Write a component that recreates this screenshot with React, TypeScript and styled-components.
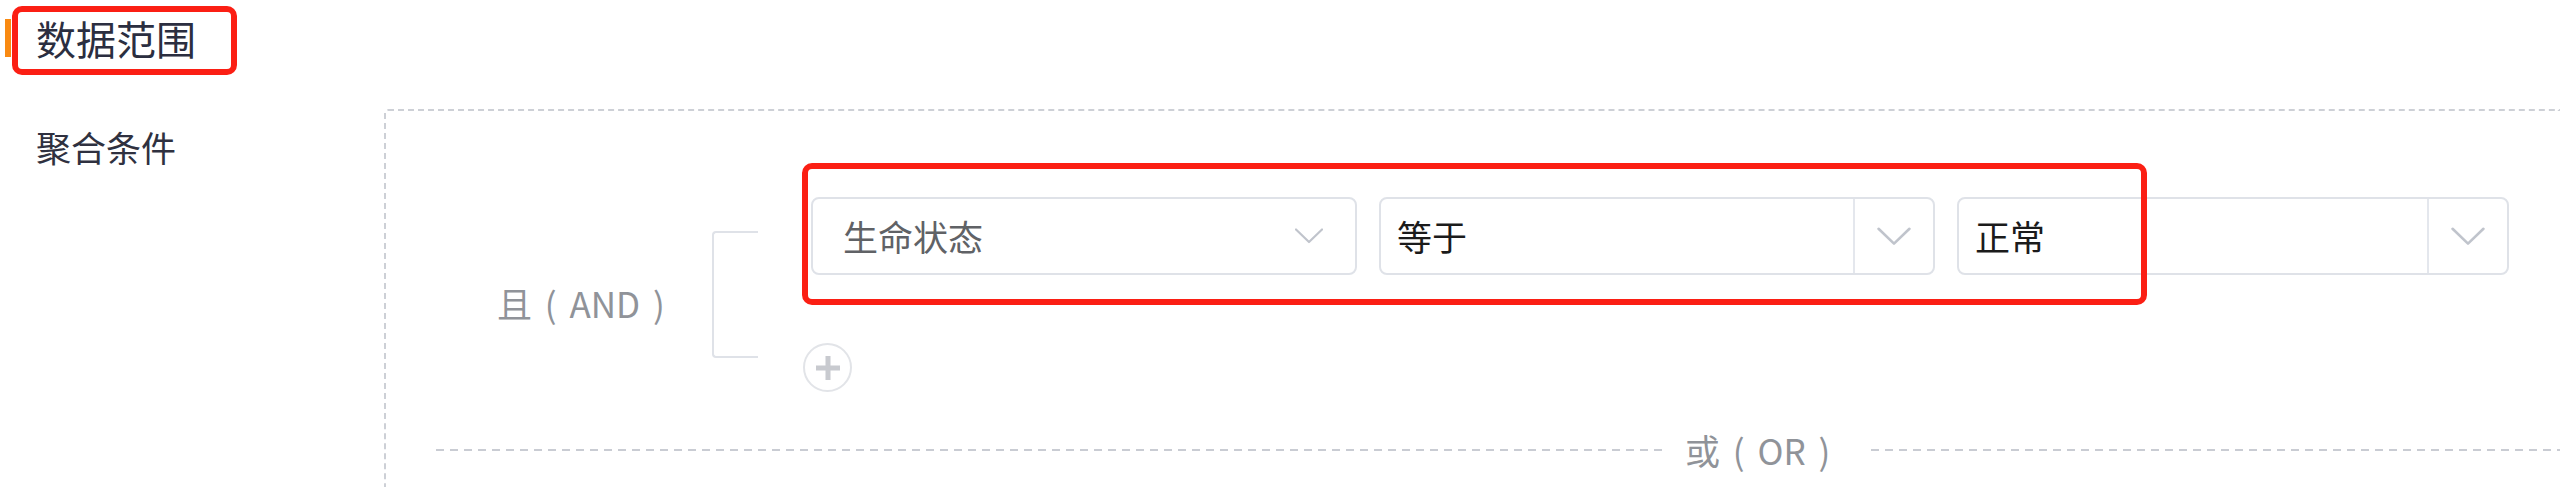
import React from 'react';
import styled, { createGlobalStyle } from 'styled-components';

const GlobalStyle = createGlobalStyle`
  html, body {
    margin: 0;
    padding: 0;
    background: #fff;
    overflow: hidden;
  }
  body {
    font-family: "Noto Sans CJK SC", "Noto Sans", sans-serif;
    color: #303133;
  }
`;

const Page = styled.div`
  position: relative;
  width: 2560px;
  height: 489px;
  overflow: hidden;
`;

const Header = styled.div`
  display: flex;
  align-items: center;
  height: 76px;
  padding-left: 5px;
  margin-bottom: 33px;
`;

const Accent = styled.span`
  width: 6px;
  height: 38px;
  background: #f98a12;
`;

const Title = styled.h2`
  margin: 0 0 0 25px;
  font-size: 40px;
  line-height: 48px;
  font-weight: 400;
  color: #2b2e40;
`;

const FormRow = styled.div`
  display: flex;
  align-items: flex-start;
`;

const Label = styled.div`
  width: 348px;
  padding: 14px 0 0 36px;
  font-size: 35px;
  line-height: 48px;
  color: #2f3140;
`;

const Canvas = styled.div`
  flex: 1;
  height: 378px;
  border-top: 2px dashed #cdd0d6;
  border-left: 2px dashed #cdd0d6;
  border-top-left-radius: 4px;
  padding: 86px 0 0 0;
  box-sizing: border-box;
`;

const Group = styled.div`
  display: flex;
  align-items: center;
  padding-left: 111px;
`;

const Joiner = styled.div`
  width: 215px;
  padding-top: 16px;
  font-size: 35px;
  line-height: 48px;
  color: #909399;
  white-space: pre;
  word-spacing: 5px;
`;

const Bracket = styled.div`
  width: 44px;
  height: 123px;
  border: 2px solid #dfe2e8;
  border-right: none;
  border-radius: 4px 0 0 4px;
`;

const Conditions = styled.div`
  display: flex;
  flex-direction: column;
  margin-left: 45px;
`;

const SelectRow = styled.div`
  display: flex;
  gap: 22px;
  margin-left: 8px;
`;

const Select = styled.div<{ $w: number; $pad: number }>`
  display: flex;
  align-items: center;
  box-sizing: border-box;
  width: ${(p) => p.$w}px;
  height: 78px;
  border: 2px solid #dfe2e8;
  border-radius: 8px;
  padding-left: ${(p) => p.$pad}px;
  background: #fff;
`;

const Value = styled.span<{ $muted?: boolean }>`
  flex: 1;
  font-size: 35px;
  line-height: 48px;
  color: ${(p) => (p.$muted ? '#606266' : '#1b1b1b')};
`;

const Arrow = styled.span<{ $split?: boolean }>`
  display: flex;
  align-items: center;
  justify-content: center;
  align-self: stretch;
  width: ${(p) => (p.$split ? '78px' : '56px')};
  border-left: ${(p) => (p.$split ? '2px solid #e4e7ed' : 'none')};
  margin-right: ${(p) => (p.$split ? '0' : '18px')};
`;

const AddButton = styled.button`
  width: 49px;
  height: 49px;
  margin-top: 68px;
  padding: 0;
  border: 2px solid #e2e4e8;
  border-radius: 50%;
  background: #fff;
  display: flex;
  align-items: center;
  justify-content: center;
`;

const Divider = styled.div`
  display: flex;
  align-items: center;
  height: 40px;
  margin: 38px 0 0 50px;
`;

const DashLine = styled.span<{ $w?: number }>`
  height: 2px;
  ${(p) => (p.$w ? `width: ${p.$w}px;` : 'flex: 1;')}
  background: repeating-linear-gradient(
    to right,
    #c9ccd3 0,
    #c9ccd3 8px,
    transparent 8px,
    transparent 14px
  );
`;

const OrText = styled.span`
  margin: 0 41px 0 23px;
  font-size: 35px;
  line-height: 40px;
  color: #909399;
  white-space: pre;
  word-spacing: 5px;
`;

const Mark = styled.div`
  position: absolute;
  box-sizing: border-box;
  border: 6px solid #fb1f14;
  border-radius: 10px;
  pointer-events: none;
`;

const Chevron: React.FC<{ w: number }> = ({ w }) => (
  <svg width={w} height={w / 2 + 2} viewBox="0 0 28 16" fill="none">
    <path d="M1 1.5 L14 14 L27 1.5" stroke="#c0c4cc" strokeWidth="2.2" strokeLinecap="round" strokeLinejoin="round" />
  </svg>
);

const App: React.FC = () => (
  <Page>
    <GlobalStyle />
    <Header>
      <Accent />
      <Title>数据范围</Title>
    </Header>
    <FormRow>
      <Label>聚合条件</Label>
      <Canvas>
        <Group>
          <Joiner>{'且 ( AND )'}</Joiner>
          <Bracket />
          <Conditions>
            <SelectRow>
              <Select $w={546} $pad={30}>
                <Value $muted>生命状态</Value>
                <Arrow>
                  <Chevron w={28} />
                </Arrow>
              </Select>
              <Select $w={556} $pad={16}>
                <Value>等于</Value>
                <Arrow $split>
                  <Chevron w={34} />
                </Arrow>
              </Select>
              <Select $w={552} $pad={16}>
                <Value>正常</Value>
                <Arrow $split>
                  <Chevron w={34} />
                </Arrow>
              </Select>
            </SelectRow>
            <AddButton aria-label="add">
              <svg width="26" height="26" viewBox="0 0 26 26">
                <path d="M13 1 V25 M1 13 H25" stroke="#c8cacf" strokeWidth="5" />
              </svg>
            </AddButton>
          </Conditions>
        </Group>
        <Divider>
          <DashLine $w={1226} />
          <OrText>{'或 ( OR )'}</OrText>
          <DashLine />
        </Divider>
      </Canvas>
    </FormRow>
    <Mark style={{ left: 12, top: 6, width: 225, height: 69 }} />
    <Mark style={{ left: 802, top: 163, width: 1345, height: 142 }} />
  </Page>
);

export default App;
